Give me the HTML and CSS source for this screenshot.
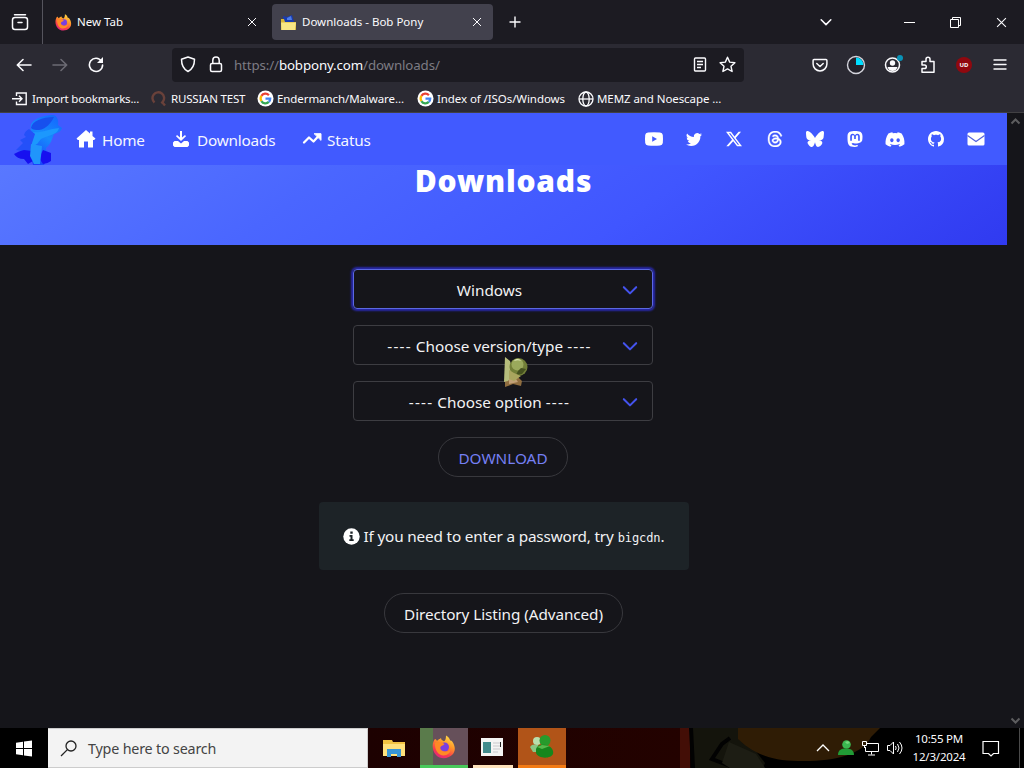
FILE: index.html
```html
<!DOCTYPE html>
<html lang="en">
<head>
  <meta charset="UTF-8" />
  <title>Downloads - Bob Pony</title>
  <link rel="stylesheet" href="styles.css">
</head>
<body>
  <!-- shared shapes -->
  <svg class="defs" width="0" height="0">
    <defs>
      <linearGradient id="fire" x1="0.8" y1="0" x2="0.3" y2="1">
        <stop offset="0" stop-color="#ffe14d"/>
        <stop offset="0.4" stop-color="#ff9628"/>
        <stop offset="0.75" stop-color="#fa3c4c"/>
        <stop offset="1" stop-color="#e0257e"/>
      </linearGradient>
      <linearGradient id="pony" x1="0.8" y1="0" x2="0.3" y2="1">
        <stop offset="0" stop-color="#1468ff"/>
        <stop offset="0.45" stop-color="#168bfc"/>
        <stop offset="1" stop-color="#1a3ffb"/>
      </linearGradient>
      <symbol id="firefox" viewBox="0 0 24 24">
        <path fill="url(#fire)" d="M3 4c1 0 1.500 1 2 2 1-1.500 3-2 4-3 0 1.500 1 2.500 3 3.200 1.500-.5 2-3 2-5.700 3 1.500 3.600 3.500 4.200 5 .8-.2 1.400.2 2 1 3.500 5 3.500 10-.2 13.500C16 24 8 24.500 4 20 .3 16 0 10 1.500 6.500c.3-.9.8-1.800 1.500-2.500z"/>
        <circle cx="12.500" cy="12" r="4.500" fill="#7a3fe0"/>
        <path fill="#ff8a25" d="M3 8c4-2 7-1 9.500 1-1 2-3 1-4 3s1 4 4 4.500 5-1 6-3c.5 4-3 7-7 7-5 0-9-5-8.500-12.500z"/>
      </symbol>
      <symbol id="google" viewBox="0 0 18 18">
        <circle cx="9" cy="9" r="8.500" fill="#fff"/>
        <g fill="none" stroke-width="2.400">
          <path stroke="#ea4335" d="M4.700 6.300A5 5 0 0 1 12.600 5.500"/>
          <path stroke="#fbbc05" d="M4.700 11.700a5 5 0 0 1 0-5.400"/>
          <path stroke="#34a853" d="M12.500 12.600a5 5 0 0 1-7.800-.9"/>
          <path stroke="#4285f4" d="M9 9.200h5c0 1.500-.5 2.500-1.500 3.400"/>
        </g>
      </symbol>
      <symbol id="close" viewBox="0 0 10 10"><path d="M1 1l8 8M9 1L1 9" fill="none" stroke="currentColor"/></symbol>
      <symbol id="chevron" viewBox="0 0 16 16"><path d="M2.500 5.500L8 11l5.500-5.500" fill="none" stroke="currentColor" stroke-width="1.800" stroke-linecap="round" stroke-linejoin="round"/></symbol>
    </defs>
  </svg>

  <div class="tabbar">
    <div class="tab-view">
      <svg width="18" height="18" viewBox="0 0 18 18" fill="none" stroke="#fbfbfe" stroke-width="1.500" stroke-linecap="round"><path d="M3.500 1.700h11"/><rect x="1.500" y="4.500" width="15" height="12" rx="2.500"/><path d="M7 9.500h4"/></svg>
    </div>
    <div class="tab">
      <svg width="17" height="17"><use href="#firefox"/></svg>
      <span class="tab-title">New Tab</span>
      <svg class="x" width="10" height="10"><use href="#close"/></svg>
    </div>
    <div class="tab active">
      <svg width="17" height="17" viewBox="0 0 17 17"><path fill="#183bb0" d="M3 2l4 1 5-2 2 7H4z"/><path fill="#4d7de8" d="M7 4l4-2 1 4H7z"/><path fill="#d8b638" d="M1 5h3l1 3h11v8H1z"/><path fill="#f8e685" d="M1 8.500h15L15 16H1.500z"/></svg>
      <span class="tab-title">Downloads - Bob Pony</span>
      <svg class="x" width="10" height="10"><use href="#close"/></svg>
    </div>
    <svg class="plus" width="12" height="12" viewBox="0 0 12 12"><path d="M6 .5v11M.5 6h11" stroke="#fbfbfe" stroke-width="1.400"/></svg>
    <div class="window-buttons">
      <svg class="list-tabs" width="14" height="14"><use href="#chevron"/></svg>
      <svg width="11" height="11"><path d="M0 5.500h11" stroke="#fff"/></svg>
      <svg width="11" height="11" fill="none" stroke="#fff"><path d="M.5 2.500h8v8h-8zM2.500 2.500v-2h8v8h-2"/></svg>
      <svg width="11" height="11"><use href="#close"/></svg>
    </div>
  </div>

  <div class="navbar">
    <div class="nav-buttons">
      <svg width="16" height="16" viewBox="0 0 16 16" fill="none" stroke="#fbfbfe" stroke-width="1.600" stroke-linecap="round" stroke-linejoin="round"><path d="M15 8H1.500M7 2.500L1.300 8 7 13.500"/></svg>
      <svg width="16" height="16" viewBox="0 0 16 16" fill="none" stroke="#6c6b74" stroke-width="1.600" stroke-linecap="round" stroke-linejoin="round"><path d="M1 8h13.500M9 2.500L14.700 8 9 13.500"/></svg>
      <svg width="16" height="16" viewBox="0 0 16 16"><path d="M13.500 4.200A6.600 6.600 0 1 0 14.600 8" fill="none" stroke="#fbfbfe" stroke-width="1.600" stroke-linecap="round"/><path d="M15 0v6H9z" fill="#fbfbfe"/></svg>
    </div>
    <div class="urlbar">
      <svg width="16" height="17" viewBox="0 0 16 17" fill="none" stroke="#fbfbfe" stroke-width="1.500" stroke-linejoin="round"><path d="M8 1l6.500 2.300c0 5.700-1.500 9.700-6.500 12.200C3 13 1.500 9 1.500 3.300z"/></svg>
      <svg class="lock" width="14" height="17" viewBox="0 0 14 17" fill="none" stroke="#fbfbfe" stroke-width="1.500"><rect x="1.500" y="7.500" width="11" height="8" rx="1.500"/><path d="M3.800 7.500V4.200a3.200 3.200 0 0 1 6.400 0v3.300"/></svg>
      <span class="url">https://<b>bobpony.com</b>/downloads/</span>
      <svg class="reader" width="14" height="15" viewBox="0 0 14 15" fill="none" stroke="#fbfbfe" stroke-width="1.400"><rect x="1.500" y="1" width="11" height="13" rx="1"/><path d="M4 4.500h6M4 7.500h6M4 10.500h4"/></svg>
      <svg width="17" height="17" viewBox="0 0 17 17" fill="none" stroke="#fbfbfe" stroke-width="1.400" stroke-linejoin="round"><path d="M8.500 1.200l2.200 4.900 5.200.6-3.900 3.600 1.100 5.200-4.600-2.600-4.600 2.600L5 10.300 1.100 6.700l5.200-.6z"/></svg>
    </div>
    <div class="tools">
      <svg width="20" height="20" viewBox="0 0 20 20" fill="none" stroke="#fbfbfe" stroke-width="1.500" stroke-linecap="round" stroke-linejoin="round"><path d="M4 4.500h12c.5 0 .9.400.9.900v3.600a6.900 6.900 0 0 1-13.800 0V5.400c0-.5.400-.9.900-.9zM6.800 8.500l3.200 3 3.200-3"/></svg>
      <svg width="20" height="20" viewBox="0 0 20 20"><circle cx="10" cy="10" r="8.500" fill="#23222b" stroke="#d4d4dc" stroke-width="1.400"/><path d="M10 10V2.500A7.500 7.500 0 0 1 17.500 10z" fill="#00ddff"/></svg>
      <svg class="account" width="22" height="22" viewBox="0 0 22 22"><circle cx="10.500" cy="11" r="7" fill="none" stroke="#fbfbfe" stroke-width="1.500"/><circle cx="10.500" cy="9" r="2.700" fill="#fbfbfe"/><path d="M5.500 13h10c-1 3-2.500 4-5 4s-4-1-5-4z" fill="#fbfbfe"/><circle cx="18" cy="4" r="3" fill="#0993b8"/></svg>
      <svg width="20" height="20" viewBox="0 0 20 20" fill="none" stroke="#fbfbfe" stroke-width="1.500" stroke-linejoin="round"><path d="M4 6.500h4V4.300a2 2 0 0 1 4 0v2.200h4v10.700H4v-3.700h2.500a1.800 1.800 0 0 0 0-3.600H4z"/></svg>
      <span class="ublock">UD</span>
      <svg class="menu" width="14" height="14"><path d="M1 2h12M1 6.500h12M1 11h12" stroke="#fbfbfe" stroke-width="1.400" stroke-linecap="round"/></svg>
    </div>
  </div>

  <div class="bookmarks">
    <div class="bookmark"><svg width="16" height="16" viewBox="0 0 16 16" fill="none" stroke="#fbfbfe" stroke-width="1.400"><path d="M4.500 5V2h9.700v11.500H4.500v-3M0 7.700h10M7 4.700l3 3-3 3"/></svg><span class="bm1">Import bookmarks...</span></div>
    <div class="bookmark"><svg width="16" height="16" viewBox="0 0 16 16" fill="none" stroke="#69413a" stroke-width="2.400"><path d="M3.500 11.500A5.800 5.800 0 1 1 12 10.500l-1.500 2M11 11l3 3.500"/></svg><span class="bm2">RUSSIAN TEST</span></div>
    <div class="bookmark"><svg width="17" height="17"><use href="#google"/></svg><span>Endermanch/Malware...</span></div>
    <div class="bookmark"><svg width="17" height="17"><use href="#google"/></svg><span>Index of /ISOs/Windows</span></div>
    <div class="bookmark"><svg width="16" height="16" viewBox="0 0 16 16" fill="none" stroke="#fbfbfe" stroke-width="1.300"><circle cx="8" cy="8" r="7"/><ellipse cx="8" cy="8" rx="3.200" ry="7"/><path d="M1 8h14"/></svg><span>MEMZ and Noescape ...</span></div>
  </div>

  <div class="viewport">
    <div class="page">
      <header>
        <nav>
          <svg class="logo" width="52" height="52" viewBox="0 0 52 52">
            <path fill="url(#pony)" d="M19 16C17 8 27 3 40 2c5 0 7 5 6 10l4 3c-1 4-5 5-8 6-2 5-3 10-8 14l1 11-3 6H21l-3-13-3-8z"/>
            <path fill="#1750ee" d="M19 15c1-7 11-11 23-11-3 6-8 12-15 13-3 0-6 0-8-2z"/>
            <path fill="#1c98fd" d="M18 18c8 4 17-2 29-3-1 7-13 8-18 11-3 3-3 7-11 7z"/>
            <path fill="#2450f9" d="M17 16q-4 2-5 6l2 2-6 3 3 3-7 7 6 1-2 5 10-2 2-11 3-9z"/>
            <path fill="#1710f0" d="M2 41q5-3 10-4l8 1 1 10-5 3-4-5q-7 0-10-5zM31 37l8 3v8q-4 3-8 3l-4-6z"/>
            <path fill="#2095fb" d="M19 31l11 2-1 10-1 8h-6l-4-8z"/>
          </svg>
          <a class="link home"><svg width="20" height="20" viewBox="0 0 20 20" fill="#fff"><path d="M10 1L.5 9.500l1.300 1.500H3v7.500h5v-6h4v6h5V11h1.200l1.300-1.500L16.500 7V2.500H14v2z"/></svg><span>Home</span></a>
          <a class="link downloads"><svg width="18" height="18" viewBox="0 0 18 18" fill="#fff"><path d="M8 1h2v6.500l3-2.500 1 1.200L9 11 4 6.200 5 5l3 2.500zM2.500 11H6l3 2.500 3-2.500h3.500l1.500 1.500v3L15.500 17h-13L1 15.500v-3z"/></svg><span>Downloads</span></a>
          <a class="link status"><svg width="20" height="18" viewBox="0 0 20 18" fill="none" stroke="#fff" stroke-width="2.300" stroke-linecap="round" stroke-linejoin="round"><path d="M2 12.500l5-5 4.500 4L17.500 5"/><path fill="#fff" stroke-width="1" d="M12.500 3.700H19V10z"/></svg><span>Status</span></a>
          <div class="social">
            <svg viewBox="0 0 20 16"><path fill-rule="evenodd" d="M4 1.500Q10 .9 16 1.500q2.500.2 2.800 2.500.4 4 0 8-.3 2.300-2.800 2.500-6 .6-12 0-2.500-.2-2.800-2.500-.4-4 0-8 .3-2.300 2.800-2.500zM8.200 5.200v5.600L13 8z"/></svg>
            <svg viewBox="0 0 16 16"><path d="M5.026 15c6.038 0 9.341-5.003 9.341-9.334q.002-.211-.006-.422A6.700 6.700 0 0 0 16 3.542a6.700 6.700 0 0 1-1.889.518 3.300 3.300 0 0 0 1.447-1.817 6.500 6.500 0 0 1-2.087.793A3.286 3.286 0 0 0 7.875 6.030a9.320 9.320 0 0 1-6.767-3.429 3.290 3.290 0 0 0 1.018 4.382A3.300 3.300 0 0 1 .64 6.575v.045a3.290 3.290 0 0 0 2.632 3.218 3.200 3.200 0 0 1-.865.115 3 3 0 0 1-.614-.057 3.280 3.280 0 0 0 3.067 2.277A6.600 6.600 0 0 1 .78 13.580a6 6 0 0 1-.78-.045A9.340 9.340 0 0 0 5.026 15"/></svg>
            <svg viewBox="0 0 16 16"><path d="M12.600.75h2.454l-5.360 6.142L16 15.250h-4.937l-3.867-5.070-4.425 5.070H.316l5.733-6.570L0 .75h5.063l3.495 4.633L12.601.75Zm-.86 13.028h1.360L4.323 2.145H2.865z"/></svg>
            <svg viewBox="0 0 16 16" stroke="#fff" stroke-width=".4"><path d="M6.321 6.016c-.27-.18-1.166-.802-1.166-.802.756-1.081 1.753-1.502 3.132-1.502.975 0 1.803.327 2.394.948s.928 1.509 1.005 2.644q.492.207.905.484c1.109.745 1.719 1.860 1.719 3.137 0 2.716-2.226 5.075-6.256 5.075C4.594 16 1 13.987 1 7.994 1 2.034 4.482 0 8.044 0 9.690 0 13.550.243 15 5.036l-1.360.353C12.516 1.974 10.163 1.430 8.006 1.430c-3.565 0-5.582 2.171-5.582 6.790 0 4.143 2.254 6.343 5.630 6.343 2.777 0 4.847-1.443 4.847-3.556 0-1.438-1.208-2.127-1.270-2.127-.236 1.234-.868 3.310-3.644 3.310-1.618 0-3.013-1.118-3.013-2.582 0-2.090 1.984-2.847 3.550-2.847.586 0 1.294.04 1.663.114 0-.637-.54-1.728-1.900-1.728-1.250 0-1.566.405-1.967.868ZM8.716 8.190c-2.040 0-2.304.87-2.304 1.416 0 .878 1.043 1.168 1.600 1.168 1.020 0 2.067-.282 2.232-2.423a6.200 6.200 0 0 0-1.528-.161"/></svg>
            <svg class="bluesky" viewBox="0 0 24 24"><path d="M12 10.800c-1.087-2.114-4.046-6.053-6.798-7.995C2.566.944 1.561 1.266.902 1.565.139 1.908 0 3.080 0 3.768c0 .69.378 5.650.624 6.479.815 2.736 3.713 3.660 6.383 3.364-3.912.58-7.387 2.005-2.830 7.078 5.013 5.190 6.870-1.113 7.823-4.308.953 3.195 2.050 9.271 7.733 4.308 4.267-4.308 1.172-6.498-2.740-7.078 2.670.297 5.568-.628 6.383-3.364.246-.828.624-5.790.624-6.478 0-.69-.139-1.861-.902-2.206-.659-.298-1.664-.62-4.300 1.240C16.046 4.748 13.087 8.687 12 10.800Z"/></svg>
            <svg viewBox="0 0 16 16"><path d="M11.190 12.195c2.016-.24 3.770-1.475 3.990-2.603.348-1.778.32-4.339.32-4.339 0-3.470-2.286-4.488-2.286-4.488C12.062.238 10.083.017 8.027 0h-.05C5.920.017 3.942.238 2.790.765c0 0-2.285 1.017-2.285 4.488l-.002.662c-.004.64-.007 1.350.011 2.091.083 3.394.626 6.740 3.780 7.570 1.454.383 2.703.463 3.709.408 1.823-.1 2.847-.647 2.847-.647l-.06-1.317s-1.303.41-2.767.36c-1.450-.05-2.980-.156-3.215-1.928a4 4 0 0 1-.033-.496s1.424.346 3.228.428c1.103.05 2.137-.064 3.188-.189zm1.613-2.470H11.130v-4.080c0-.859-.364-1.295-1.091-1.295-.804 0-1.207.517-1.207 1.541v2.233H7.168V5.890c0-1.024-.403-1.541-1.207-1.541-.727 0-1.091.436-1.091 1.296v4.079H3.197V5.522q0-1.288.66-2.046c.456-.505 1.052-.764 1.793-.764.856 0 1.504.328 1.933.983L8 4.390l.417-.695c.429-.655 1.077-.983 1.934-.983.74 0 1.336.259 1.791.764q.662.757.661 2.046z"/></svg>
            <svg class="discord" viewBox="0 0 16 16"><path d="M13.545 2.907a13.200 13.200 0 0 0-3.257-1.011.05.05 0 0 0-.052.025c-.141.25-.297.577-.406.833a12.200 12.200 0 0 0-3.658 0 8 8 0 0 0-.412-.833.05.05 0 0 0-.052-.025c-1.125.194-2.220.534-3.257 1.011a.04.04 0 0 0-.021.018C.356 6.024-.213 9.047.066 12.032q.003.022.021.037a13.300 13.300 0 0 0 3.995 2.020.05.05 0 0 0 .056-.019q.463-.63.818-1.329a.05.05 0 0 0-.01-.059l-.018-.011a9 9 0 0 1-1.248-.595.05.05 0 0 1-.02-.066l.015-.019q.127-.095.248-.195a.05.05 0 0 1 .051-.007c2.619 1.196 5.454 1.196 8.041 0a.05.05 0 0 1 .053.007q.121.1.248.195a.05.05 0 0 1-.004.085 8 8 0 0 1-1.249.594.05.05 0 0 0-.03.03.05.05 0 0 0 .003.041c.24.465.515.909.817 1.329a.05.05 0 0 0 .056.019 13.200 13.200 0 0 0 4.001-2.020.05.05 0 0 0 .021-.037c.334-3.451-.559-6.449-2.366-9.106a.03.03 0 0 0-.02-.019m-8.198 7.307c-.789 0-1.438-.724-1.438-1.612s.637-1.613 1.438-1.613c.807 0 1.450.73 1.438 1.613 0 .888-.637 1.612-1.438 1.612m5.316 0c-.788 0-1.438-.724-1.438-1.612s.637-1.613 1.438-1.613c.807 0 1.451.73 1.438 1.613 0 .888-.631 1.612-1.438 1.612"/></svg>
            <svg viewBox="0 0 16 16"><path d="M8 0C3.580 0 0 3.580 0 8c0 3.540 2.290 6.530 5.470 7.590.4.07.55-.17.55-.38 0-.19-.01-.82-.01-1.490-2.010.37-2.530-.49-2.690-.94-.09-.23-.48-.94-.82-1.130-.28-.15-.68-.52-.01-.53.63-.01 1.080.58 1.230.82.72 1.210 1.870.87 2.330.66.07-.52.28-.87.51-1.070-1.780-.2-3.640-.89-3.640-3.950 0-.87.31-1.590.82-2.150-.08-.2-.36-1.020.08-2.120 0 0 .67-.21 2.200.82.64-.18 1.320-.27 2-.27s1.360.09 2 .27c1.530-1.040 2.200-.82 2.200-.82.44 1.100.16 1.920.08 2.120.51.56.82 1.270.82 2.150 0 3.070-1.870 3.750-3.650 3.950.29.25.54.73.54 1.480 0 1.070-.01 1.930-.01 2.200 0 .21.15.46.55.38A8.010 8.010 0 0 0 16 8c0-4.420-3.580-8-8-8z"/></svg>
            <svg viewBox="0 0 18 16"><rect x=".5" y="1.500" width="17" height="13" rx="1.500"/><path d="M.5 4.500L9 10.500l8.500-6" fill="none" stroke="#5263dd" stroke-width="1.200"/></svg>
          </div>
        </nav>
        <h1>Downloads</h1>
      </header>

      <main>
        <div class="select focus"><span>Windows</span><svg width="18" height="18"><use href="#chevron"/></svg></div>
        <div class="select"><span><i>----</i> Choose version/type <i>----</i></span><svg width="18" height="18"><use href="#chevron"/></svg></div>
        <div class="select"><span><i>----</i> Choose option <i>----</i></span><svg width="18" height="18"><use href="#chevron"/></svg></div>
        <button class="download">DOWNLOAD</button>
        <div class="note">
          <svg width="17" height="17" viewBox="0 0 17 17"><circle cx="8.500" cy="8.500" r="8.200" fill="#fff"/><path d="M7.300 3.500h2.400v2.200H7.300zM6.500 7h3v4.300h1.200V13H6.300v-1.700h1.200V8.700h-1z" fill="#1d2428"/></svg>
          <span class="note-text">If you need to enter a password, try</span><code>bigcdn</code><span>.</span>
        </div>
        <button class="directory">Directory Listing (Advanced)</button>
      </main>
    </div>
    <div class="scrollbar">
      <svg width="11" height="8" viewBox="0 0 11 8"><path d="M1.500 6.500l4-4 4 4" fill="none" stroke="#5d5d5f" stroke-width="2"/></svg>
      <svg width="11" height="8" viewBox="0 0 11 8"><path d="M1.500 1.500l4 4 4-4" fill="none" stroke="#5d5d5f" stroke-width="2"/></svg>
    </div>
    <svg class="cursor" width="26" height="32" viewBox="0 0 26 32">
      <path fill="#8f6d3f" d="M2 18l8-2 9 9-1 5-8-2-8 3z"/>
      <path fill="#b6bd7c" d="M2 1l5 4 4 13-6 7-4 1z"/>
      <circle cx="15.500" cy="11" r="9" fill="#727f38"/>
      <circle cx="14.500" cy="8.500" r="6" fill="#9aa95c"/>
      <path fill="#dbe2b2" d="M11 5c2-3 6-2 7 0-2-1-4-1-7 0z"/>
      <path fill="#45511f" d="M18 12l5 1-4 5-6 1 2-4z"/>
      <path fill="#c1a077" d="M6 23l5-3 4 6-9 2z"/>
      <path fill="#a9a55e" d="M6 14l5 3 7 3-7 5-5-2z"/>
    </svg>
  </div>

  <div class="taskbar">
    <!-- wallpaper showing through the bar -->
    <svg class="wallpaper" width="344" height="40" viewBox="0 0 344 40">
      <path fill="#430e06" d="M0 0h10v40H0z"/>
      <path fill="#14140c" d="M13 0h45L85 35l-2 5H13z"/>
      <path fill="#2f1c05" d="M58 0h142l-9 9c-8 18-39 25-73 24-35 0-50-13-60-22z"/>
      <path fill="none" stroke="#020202" stroke-width="4" d="M50 10L42 16 32 31l18 7M11 0l2 40"/>
      <path fill="#1d1d14" d="M49 14l27 12 9 14H50l-8-5z"/>
    </svg>
    <div class="start"><svg width="16" height="17" viewBox="0 0 16 17" fill="#fff"><path d="M0 2.800l7-1V8H0zM8 1.600L16 .5V8H8zM0 9h7v6.200l-7-1zM8 9h8v7.500l-8-1.100z"/></svg></div>
    <div class="search"><svg width="17" height="17" viewBox="0 0 17 17" fill="none" stroke="#222" stroke-width="1.300"><circle cx="11" cy="6" r="5"/><path d="M7.400 9.600L1 16"/></svg><span>Type here to search</span></div>
    <div class="apps">
      <div class="app"><svg width="22" height="19" viewBox="0 0 22 19"><path fill="#f2c343" d="M0 1h9l1 2h12v14H0z"/><path fill="#ffe17c" d="M0 5h22v12H0z"/><path fill="#3795d5" d="M4 10h14v8h-4v-3H8v3H4z"/></svg></div>
      <div class="app firefox"><svg width="24" height="24"><use href="#firefox"/></svg></div>
      <div class="app setup"><svg width="22" height="18" viewBox="0 0 22 18"><path fill="#f4f4f3" d="M0 0h22v18H0z"/><path fill="#418b8c" d="M2 4h8v11H2z"/><path d="M12 5h7M12 8h7M12 11h7M12 14h5" stroke="#c8c9cc"/><path fill="#222" d="M19 4h1v5h-1z"/></svg></div>
      <div class="app msn"><svg width="26" height="24" viewBox="0 0 26 24"><circle cx="8" cy="6" r="4" fill="#b9dfad"/><path fill="#8ac784" d="M1 12c2-3 4-3 8-2l1 7H4z"/><circle cx="16" cy="5.500" r="5.500" fill="#279a2b"/><path fill="#16861c" d="M7 14c1-4 5-5 10-4 5 1 8 5 7 9-2 5-15 5-17-1z"/><path fill="#57b84c" d="M8 12l5-2 8 1-8 3z"/></svg></div>
    </div>
    <div class="tray">
      <svg width="14" height="8" viewBox="0 0 14 8"><path d="M1 7l6-6 6 6" fill="none" stroke="#fff" stroke-width="1.300"/></svg>
      <svg width="16" height="16" viewBox="0 0 16 16"><circle cx="8.500" cy="4.500" r="4.300" fill="#3bb850"/><path fill="#219b36" d="M0 15c0-5 3-6.500 8-6.500s8 2 8 6.500z"/><path fill="#75d77c" d="M7 2l3-1 2 2-3 1z"/></svg>
      <svg width="17" height="15" viewBox="0 0 17 15" fill="none" stroke="#fff"><path d="M5 2.500h11.500v8H3.500V6M9.500 10.500v3M6 14h7M.5.500h4v4h-4zM2.500 4.500V7"/></svg>
      <svg width="16" height="14" viewBox="0 0 16 14" fill="none" stroke="#fff"><path d="M.5 4.500H3L6.500 1v12L3 9.500H.5zM8.500 5q1.300 2 0 4M10.500 3q3 4 0 8M12.500 1q5 6 0 12"/></svg>
    </div>
    <div class="clock"><span class="time">10:55 PM</span><span class="date">12/3/2024</span></div>
    <svg class="notifications" width="18" height="17" viewBox="0 0 18 17"><path d="M1 1.500h15.500v12h-5L9 16l-2.500-2.500H1z" fill="none" stroke="#fff" stroke-width="1.200"/></svg>
    <div class="show-desktop"></div>
  </div>
</body>
</html>
```
FILE: styles.css
```css
* {
  box-sizing: border-box;
}

body {
  margin: 0;
  width: 1024px;
  height: 768px;
  overflow: hidden;
  display: flex;
  flex-direction: column;
  background: #15151a;
  color: #fbfbfe;
  font-family: "Noto Sans", "Open Sans", sans-serif;
  font-size: 11.5px;
}

svg {
  display: block;
  flex: none;
}

span {
  white-space: nowrap;
}

.defs {
  position: absolute;
}

/* Browser tabs */
.tabbar {
  display: flex;
  align-items: center;
  height: 44px;
  flex: none;
  background: #1c1b22;
}

.tab-view {
  width: 43px;
  height: 44px;
  padding: 13px 11px;
  border-right: 1px solid #55545d;
}

.tab {
  display: flex;
  align-items: center;
  width: 229px;
  height: 36px;
  padding: 0 15px 0 12px;
}

.tab-title {
  margin-left: 5px;
  padding-bottom: 1px;
}

.tab .x {
  margin-left: auto;
}

.tab.active {
  width: 221px;
  padding: 0 11px 0 8px;
  background: #42414d;
  border-radius: 4px;
}

.plus {
  margin-left: 16px;
}

.window-buttons {
  display: flex;
  align-items: center;
  gap: 35px;
  margin-left: auto;
  padding-right: 17px;
}

.list-tabs {
  margin-right: 36px;
}

/* Address bar */
.navbar {
  display: flex;
  align-items: center;
  height: 41px;
  flex: none;
  background: #2b2a33;
}

.nav-buttons {
  display: flex;
  gap: 20px;
  width: 172px;
  padding-left: 16px;
}

.urlbar {
  display: flex;
  align-items: center;
  width: 572px;
  height: 34px;
  padding: 0 8px;
  background: #1c1b22;
  border-radius: 4px;
}

.lock {
  margin-left: 13px;
}

.url {
  margin-left: 11px;
  padding-top: 1px;
  color: #7d7c84;
  font-size: 13.3px;
  letter-spacing: -0.12px;
}

.url b {
  color: #fbfbfe;
  font-weight: normal;
}

.reader {
  margin: 0 12px 0 auto;
}

.tools {
  display: flex;
  align-items: center;
  gap: 16px;
  margin-left: 66px;
}

.account {
  margin-right: -2px;
}

.ublock {
  width: 16px;
  height: 16px;
  margin: 0 2px;
  border-radius: 50%;
  background: #90080f;
  font-size: 6px;
  font-weight: bold;
  line-height: 16px;
  text-align: center;
}

.menu {
  margin-left: 3px;
}

.bookmarks {
  display: grid;
  grid-template-columns: 139px 106px 160px 161px auto;
  align-items: center;
  height: 27px;
  flex: none;
  padding-left: 12px;
  background: #2b2a33;
  letter-spacing: -0.08px;
}

.bookmark {
  display: flex;
  align-items: center;
  gap: 3px;
}

.bookmark span {
  padding-bottom: 1px;
}

.bm1 {
  margin-left: 1px;
  letter-spacing: -0.18px;
}

.bm2 {
  margin-left: 1px;
  letter-spacing: -0.2px;
}

/* Site */
.viewport {
  position: relative;
  display: flex;
  height: 616px;
  border-top: 1px solid #414043;
  background: #15151a;
}

.page {
  width: 1007px;
}

header {
  height: 132px;
  background: linear-gradient(145deg, #5c7cff 0%, #4a66ff 35%, #4056ff 65%, #303af0 100%);
}

nav {
  display: flex;
  align-items: center;
  height: 52px;
  padding-left: 12px;
  background: #415aff;
}

.link {
  display: flex;
  align-items: center;
  color: #f5f6ff;
  font-size: 15.3px;
  letter-spacing: -0.2px;
}

.link span {
  padding-top: 2px;
}

.home {
  width: 96px;
  margin-left: 12px;
  gap: 6px;
}

.downloads {
  width: 130px;
  gap: 7px;
}

.status {
  gap: 5px;
}

.social {
  display: flex;
  align-items: center;
  margin-left: auto;
  padding-right: 21px;
  gap: 20.3px;
}

.social svg {
  width: 20px;
  height: 16px;
  fill: #fff;
}

.social .bluesky {
  height: 18px;
}

.social .discord {
  height: 19px;
}

h1 {
  margin: 0;
  color: #fff;
  font-size: 30px;
  font-weight: 900;
  letter-spacing: 0.8px;
  line-height: 32px;
  text-align: center;
}

main {
  display: flex;
  flex-direction: column;
  align-items: center;
  padding-top: 24px;
  color: #f2f2f4;
  font-size: 15.3px;
}

header {
  overflow: hidden;
}

.select {
  display: flex;
  align-items: center;
  width: 300px;
  height: 40px;
  margin: 0 1px 16px 0;
  padding: 1px 13px 0 14px;
  border: 1px solid #3d3d42;
  border-radius: 4px;
}

.select span {
  flex: 1;
  padding: 0 10px 0 0;
  text-align: center;
}

.select i {
  font-style: normal;
  letter-spacing: 1.2px;
}

.select svg {
  color: #4453ee;
}

.select.focus {
  border-color: #5b68e0;
  box-shadow: 0 0 2px 2px #2828a8;
}

button {
  height: 40px;
  padding: 1px 0 0;
  border: 1px solid #38383d;
  border-radius: 20px;
  background: transparent;
  color: #f2f2f4;
  font-family: inherit;
  font-size: 15.3px;
}

.download {
  width: 130px;
  margin-right: 1px;
  color: #7580f4;
}

.note {
  display: flex;
  align-items: center;
  width: 370px;
  height: 68px;
  margin: 25px 0 23px;
  padding: 0 24px;
  border-radius: 4px;
  background: #1d2327;
}

.note-text {
  margin-left: 4px;
  letter-spacing: -0.16px;
}

code {
  margin-left: 4px;
  padding-top: 3px;
  font-family: "DejaVu Sans Mono", monospace;
  font-size: 12px;
  letter-spacing: -0.1px;
}

.directory {
  width: 239px;
  letter-spacing: -0.08px;
}

.scrollbar {
  display: flex;
  flex-direction: column;
  align-items: center;
  justify-content: space-between;
  width: 17px;
  padding: 4px 0 3px;
}

.cursor {
  position: absolute;
  left: 503px;
  top: 243px;
}

/* Windows taskbar */
.taskbar {
  position: relative;
  display: flex;
  align-items: center;
  height: 40px;
  flex: none;
  background: linear-gradient(90deg, #000 48px, #1d0101 368px, #230200 680px, #000 700px);
}

.wallpaper {
  position: absolute;
  left: 680px;
  top: 0;
}

.start {
  width: 48px;
  padding-left: 16px;
}

.search {
  display: flex;
  align-items: center;
  width: 320px;
  height: 40px;
  padding-left: 12px;
  gap: 11px;
  border: 1px solid #ccc;
  border-left: 0;
  background: #f3f3f3;
  color: #444;
  font-size: 14.3px;
  letter-spacing: -0.18px;
}

.apps {
  display: flex;
}

.app {
  display: flex;
  align-items: center;
  justify-content: center;
  width: 52px;
  height: 40px;
}

.app.firefox {
  width: 48px;
  border-bottom: 3px solid #48c95b;
  background: linear-gradient(90deg, #5a7b4b 13px, #66505a 13px);
}

.app.setup {
  width: 40px;
  margin: 0 5px;
  padding-right: 2px;
  border-bottom: 3px solid #fee1ba;
}

.app.msn {
  width: 48px;
  border-bottom: 3px solid #f37b15;
  background: #b15418;
}

.tray {
  position: relative;
  display: flex;
  align-items: center;
  gap: 8px;
  margin-left: auto;
}

.clock {
  position: relative;
  display: flex;
  flex-direction: column;
  align-items: center;
  width: 72px;
  padding-bottom: 1px;
  line-height: 18px;
  letter-spacing: -0.2px;
}

.notifications {
  position: relative;
  margin: 0 19px 0 7px;
}

.show-desktop {
  position: relative;
  width: 5px;
  height: 40px;
  border-left: 1px solid #4a4a4a;
}
```
